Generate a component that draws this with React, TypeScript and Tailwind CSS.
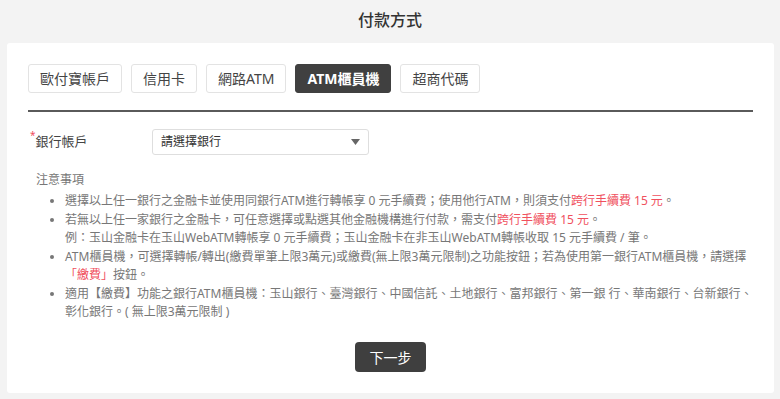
const font = { fontFamily: '"Noto Sans", "Noto Sans CJK TC", sans-serif' };

const tabs = ["歐付寶帳戶", "信用卡", "網路ATM", "ATM櫃員機", "超商代碼"];

function Red({ children }: { children: React.ReactNode }) {
    return <span className="text-[#f0505e]">{children}</span>;
}

export default function App() {
    return (
        <div className="w-[780px] h-[399px] bg-[#f3f3f3] overflow-hidden" style={font}>
            <div className="h-[43px] flex items-center justify-center pb-[3px]">
                <h1 className="text-[16px] font-medium text-[#333]">付款方式</h1>
            </div>
            <div className="ml-[7px] mr-[6px] h-[350px] bg-white rounded-[3px] px-[21px] pt-[21px] pb-[21px] flex flex-col">
                {/* tabs */}
                <div className="flex gap-[9px]">
                    {tabs.map((t) => (
                        <div
                            key={t}
                            className={
                                t === "ATM櫃員機"
                                    ? "h-[29px] px-[11px] flex items-center rounded-[3px] bg-[#404040] border border-[#404040] text-white text-[14px] font-bold"
                                    : "h-[29px] px-[11px] flex items-center rounded-[3px] border border-[#e3e3e3] text-[#444] text-[14px]"
                            }
                        >
                            {t}
                        </div>
                    ))}
                </div>
                <div className="mt-[17px] h-[2px] bg-[#5a5a5a]"></div>

                {/* bank select */}
                <div className="mt-[17px] flex items-center">
                    <div className="w-[124px] pl-[2px] flex text-[13px] text-[#444]">
                        <span className="text-[#f0505e] text-[10px] leading-none -mt-[2px]">*</span>
                        <span>銀行帳戶</span>
                    </div>
                    <div className="w-[217px] h-[26px] border border-[#dedede] rounded-[3px] flex items-center justify-between pl-[8px] pr-[8px]">
                        <span className="text-[12px] text-[#333]">請選擇銀行</span>
                        <svg width="9" height="6" viewBox="0 0 9 6">
                            <path d="M0 0 H9 L4.5 6 Z" fill="#666" />
                        </svg>
                    </div>
                </div>

                {/* notes */}
                <div className="mt-[16px] pl-[8px] text-[12px] leading-[18px] text-[#777]">
                    <div>注意事項</div>
                    <ul className="mt-[3px] list-disc pl-[29px] flex flex-col gap-[1px] marker:text-[#777]">
                        <li>
                            選擇以上任一銀行之金融卡並使用同銀行ATM進行轉帳享 0 元手續費；使用他行ATM，則須支付<Red>跨行手續費 15 元</Red>。
                        </li>
                        <li>
                            若無以上任一家銀行之金融卡，可任意選擇或點選其他金融機構進行付款，需支付<Red>跨行手續費 15 元</Red>。
                            <br />
                            例：玉山金融卡在玉山WebATM轉帳享 0 元手續費；玉山金融卡在非玉山WebATM轉帳收取 15 元手續費 / 筆。
                        </li>
                        <li>
                            ATM櫃員機，可選擇轉帳/轉出(繳費單筆上限3萬元)或繳費(無上限3萬元限制)之功能按鈕；若為使用第一銀行ATM櫃員機，請選擇
                            <br />
                            <Red>「繳費」</Red>按鈕。
                        </li>
                        <li>
                            適用【繳費】功能之銀行ATM櫃員機：玉山銀行、臺灣銀行、中國信託、土地銀行、富邦銀行、第一銀 行、華南銀行、台新銀行、
                            <br />
                            彰化銀行。( 無上限3萬元限制 )
                        </li>
                    </ul>
                </div>

                <div className="mt-auto flex justify-center">
                    <button className="w-[71px] h-[30px] rounded-[4px] bg-[#3f3f3f] text-white text-[14px]">
                        下一步
                    </button>
                </div>
            </div>
        </div>
    );
}
